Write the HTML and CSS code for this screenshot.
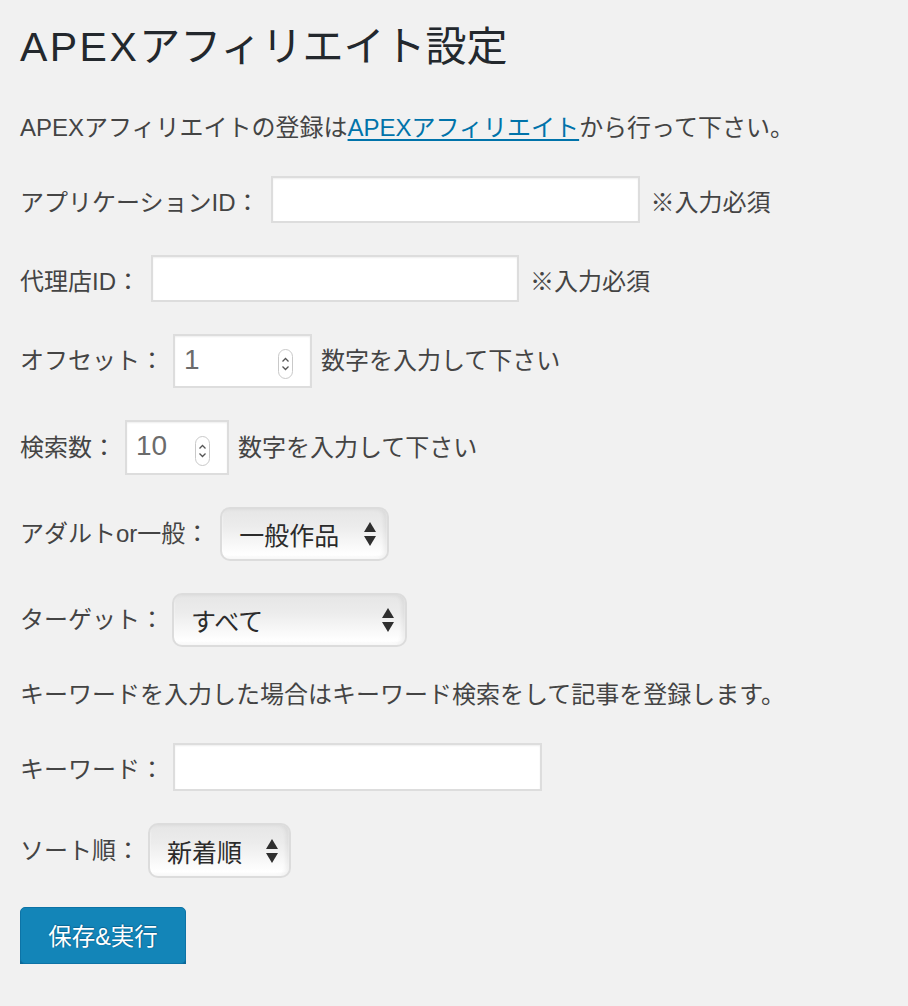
FILE: index.html
```html
<!DOCTYPE html>
<html lang="ja">
<head>
<meta charset="utf-8">
<title>APEXアフィリエイト設定</title>
<link rel="stylesheet" href="styles.css">
</head>
<body>
<div class="wrap">
  <h1 class="title"><span class="en">APEX</span>アフィリエイト設定</h1>
  <form class="form">
    <p class="line">APEXアフィリエイトの登録は<a class="link" href="#">APEXアフィリエイト</a>から行って下さい。</p>

    <div class="row row-text">
      <label class="label">アプリケーションID：</label>
      <input class="text w-app" type="text">
      <span class="note">※入力必須</span>
    </div>

    <div class="row row-text">
      <label class="label">代理店ID：</label>
      <input class="text w-agency" type="text">
      <span class="note">※入力必須</span>
    </div>

    <div class="row row-tight">
      <label class="label">オフセット：</label>
      <span class="num w-offset">
        <input class="num-input" type="number" value="1">
        <svg class="spin" width="15" height="30" viewBox="0 0 15 30"><rect x="0.5" y="0.5" width="14" height="29" rx="7" fill="#fff" stroke="#c9c9c9"/><polyline points="4.5,12.5 7.5,9.5 10.5,12.5" fill="none" stroke="#555" stroke-width="1.3"/><polyline points="4.5,17.5 7.5,20.5 10.5,17.5" fill="none" stroke="#555" stroke-width="1.3"/></svg>
      </span>
      <span class="note">数字を入力して下さい</span>
    </div>

    <div class="row row-tight">
      <label class="label">検索数：</label>
      <span class="num w-count">
        <input class="num-input" type="number" value="10">
        <svg class="spin" width="15" height="30" viewBox="0 0 15 30"><rect x="0.5" y="0.5" width="14" height="29" rx="7" fill="#fff" stroke="#c9c9c9"/><polyline points="4.5,12.5 7.5,9.5 10.5,12.5" fill="none" stroke="#555" stroke-width="1.3"/><polyline points="4.5,17.5 7.5,20.5 10.5,17.5" fill="none" stroke="#555" stroke-width="1.3"/></svg>
      </span>
      <span class="note">数字を入力して下さい</span>
    </div>

    <div class="row">
      <label class="label">アダルトor一般：</label>
      <span class="sel w-adult">
        <select class="sel-input"><option>一般作品</option><option>アダルト作品</option></select>
        <svg class="arrows" width="12" height="24" viewBox="0 0 12 24"><polygon points="0,10 6,0 12,10" fill="#2f2f2f"/><polygon points="0,14 12,14 6,24" fill="#2f2f2f"/></svg>
      </span>
    </div>

    <div class="row row-tighter">
      <label class="label">ターゲット：</label>
      <span class="sel w-target">
        <select class="sel-input"><option>すべて</option></select>
        <svg class="arrows" width="12" height="24" viewBox="0 0 12 24"><polygon points="0,10 6,0 12,10" fill="#2f2f2f"/><polygon points="0,14 12,14 6,24" fill="#2f2f2f"/></svg>
      </span>
    </div>

    <p class="line">キーワードを入力した場合はキーワード検索をして記事を登録します。</p>

    <div class="row row-text row-tight">
      <label class="label">キーワード：</label>
      <input class="text w-keyword" type="text">
    </div>

    <div class="row row-tighter">
      <label class="label">ソート順：</label>
      <span class="sel w-sort">
        <select class="sel-input"><option>新着順</option><option>人気順</option></select>
        <svg class="arrows" width="12" height="24" viewBox="0 0 12 24"><polygon points="0,10 6,0 12,10" fill="#2f2f2f"/><polygon points="0,14 12,14 6,24" fill="#2f2f2f"/></svg>
      </span>
    </div>

    <button class="button-primary" type="button">保存&amp;実行</button>
  </form>
</div>
</body>
</html>
```

FILE: styles.css
```css
html, body {
  margin: 0;
  padding: 0;
}

body {
  background: #f1f1f1;
  color: #444;
  font-family: "Liberation Sans", "Noto Sans CJK JP", sans-serif;
  font-size: 24px;
}

.wrap {
  padding: 23px 20px 0;
}

.en {
  letter-spacing: 0.06em;
}

.title {
  margin: 0;
  font-size: 41px;
  font-weight: 400;
  line-height: 48px;
  color: #23282d;
}

.form {
  display: flex;
  flex-direction: column;
  align-items: flex-start;
  gap: 32px;
  margin: 41px 0 0;
}

.line {
  margin: 0;
  line-height: 32px;
}

.link {
  color: #0073aa;
  text-decoration: underline;
  text-underline-offset: 3px;
}

.row {
  display: flex;
  align-items: center;
  gap: 11px;
}

.row-tight {
  gap: 9px;
}

.row-tighter {
  gap: 8px;
}

.label {
  line-height: 32px;
}

.row-text .label,
.row-text .note {
  padding-top: 6px;
}

.note {
  line-height: 32px;
}

.text {
  box-sizing: border-box;
  height: 47px;
  margin: 0;
  padding: 0 10px;
  border: 2px solid #dddddd;
  background: #fff;
  box-shadow: inset 0 1px 2px rgba(0, 0, 0, 0.07);
  font: inherit;
  color: #333;
  outline: none;
}

.w-app { width: 369px; }
.w-agency { width: 368px; }
.w-keyword { width: 369px; height: 48px; }

.num {
  position: relative;
  display: inline-block;
}

.w-offset { width: 139px; height: 54px; }
.w-count { width: 104px; height: 55px; }

.num-input {
  box-sizing: border-box;
  width: 100%;
  height: 100%;
  margin: 0;
  padding: 0 40px 3px 9px;
  border: 2px solid #dddddd;
  background: #fff;
  box-shadow: inset 0 1px 2px rgba(0, 0, 0, 0.07);
  font-family: "Liberation Sans", "Noto Sans", sans-serif;
  font-size: 28px;
  color: #6b6b6b;
  outline: none;
  -moz-appearance: textfield;
  appearance: textfield;
}

.num-input::-webkit-inner-spin-button,
.num-input::-webkit-outer-spin-button {
  -webkit-appearance: none;
  margin: 0;
}

.spin {
  position: absolute;
  right: 19px;
  top: calc(50% - 12px);
}

.sel {
  position: relative;
  display: inline-block;
  height: 54px;
}

.w-adult { width: 169px; }
.w-target { width: 235px; }
.w-sort { width: 143px; height: 55px; }

.sel-input {
  box-sizing: border-box;
  width: 100%;
  height: 100%;
  margin: 0;
  padding: 0 30px 0 17px;
  border: 2px solid #dcdcdc;
  border-radius: 10px;
  background: linear-gradient(to bottom, #e6e6e6 0%, #ececec 35%, #f6f6f6 65%, #ffffff 92%, #f4f4f4 100%);
  box-shadow: inset -3px 0 4px rgba(0, 0, 0, 0.06), inset 0 -2px 2px rgba(255, 255, 255, 0.9);
  font-family: "Noto Sans CJK JP", "Noto Sans", sans-serif;
  font-size: 25px;
  color: #2b2b2b;
  -webkit-appearance: none;
  appearance: none;
  outline: none;
}

.arrows {
  position: absolute;
  right: 13px;
  top: calc(50% - 12px);
  pointer-events: none;
}

.button-primary {
  box-sizing: border-box;
  width: 166px;
  height: 57px;
  margin: -3px 0 0;
  padding: 0 0 2px;
  border: 1px solid #0d73a6;
  border-radius: 5px;
  background: #1385b8;
  box-shadow: 0 4px 0 #0c6898;
  color: #fff;
  font-family: "Liberation Sans", "Noto Sans CJK JP", sans-serif;
  font-size: 23.5px;
  text-shadow: 0 -1px 1px #0a6593, 1px 0 1px #0a6593;
  cursor: pointer;
}
```
